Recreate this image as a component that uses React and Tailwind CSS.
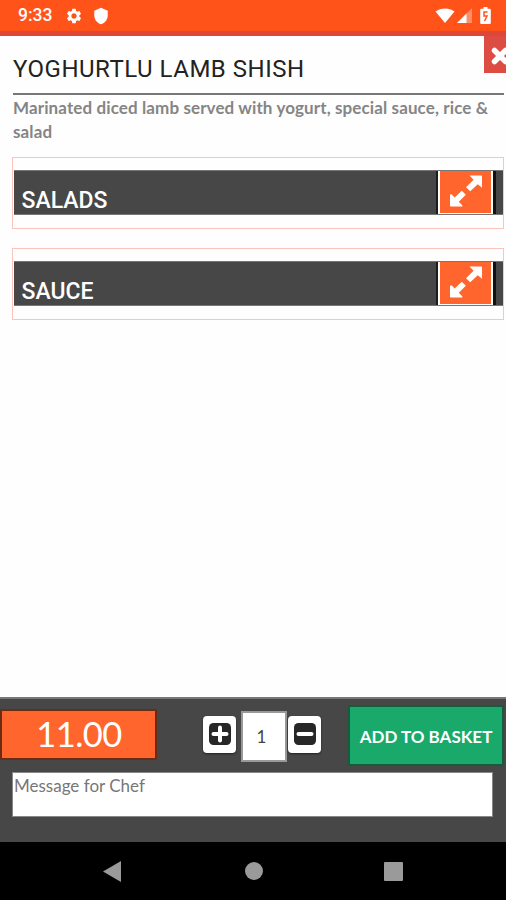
import React from 'react';
import { MdSettings, MdShield } from 'react-icons/md';

const ResizeIcon = () => (
    <svg className="w-[34px] h-[34px]" viewBox="0 0 34 34" fill="#fff">
        <path d="M20.500 1.500H32.200a.8.8 0 0 1 .8.800V13.800L28.800 10.200L21.200 17.200L17 13.200L24.600 5.800Z" />
        <path d="M1.800 20.200q.6 0 1 .4L5.600 23.500L12.800 16.800L16.800 20.800L9.800 27.800L13.400 31.500V32.500H1.800a.8.8 0 0 1-.8-.8V21Z" />
    </svg>
);

const StatusBar = () => (
    <div className="h-9 bg-[#ff5319] border-b-[5px] border-[#de4736] flex items-center justify-between pl-[18px] pr-[15px] text-white">
        <div className="flex items-center">
            <span className="w-[35px] font-['Roboto',sans-serif] font-medium text-[17.500px] leading-none">9:33</span>
            <MdSettings className="w-[18px] h-[18px] ml-3" />
            <MdShield className="w-[18px] h-[18px] ml-[9px]" />
        </div>
        <div className="flex items-center">
            <svg className="w-5 h-4" viewBox="0 0 20 16" fill="#fff">
                <path d="M10 15L.5 3.500C6 -.5 14 -.5 19.500 3.500Z" />
            </svg>
            <svg className="w-[15px] h-[15px] ml-[2px]" viewBox="0 0 15 15" fill="#fff">
                <path d="M0 15L15 0V15Z" fillOpacity=".35" />
                <path d="M0 15L9.500 5.500V15Z" />
            </svg>
            <svg className="w-[11px] h-[17px] ml-2" viewBox="0 0 11 17">
                <path d="M3.500 0h4v1.800h2.300q1 0 1 1V16q0 1-1 1H1.200q-1 0-1-1V2.800q0-1 1-1h2.300Z" fill="#fff" />
                <path d="M7.500 5H4V9H7L4.500 14" fill="none" stroke="#ff5319" strokeWidth="1.500" />
            </svg>
        </div>
    </div>
);

const OptionGroup = ({ title }) => (
    <div className="h-[72px] border border-[#fbc4bc] pl-px py-3">
        <div className="h-[45px] bg-[#474747] border-y border-[#777] flex">
            <h2 className="flex-1 pl-[7.500px] pt-[14px] h-[43px] font-['Roboto',sans-serif] font-medium text-[23px] leading-8 text-white">
                {title}
            </h2>
            <div className="w-[2px] bg-[#1c1c1c]" />
            <button className="w-[55px] border-x-2 border-b border-white bg-[#ff652d] flex items-start justify-center pt-[3px]">
                <ResizeIcon />
            </button>
            <div className="w-[10px] border-l-[3px] border-[#111]" />
        </div>
    </div>
);

const QuantityButton = ({ plus }) => (
    <button className="w-[33px] h-[37px] rounded-[4px] bg-white shadow-[0_1px_2px_#222] flex justify-center pt-[7px]">
        <svg className="w-[22px] h-[22px]" viewBox="0 0 22 22">
            <rect width="22" height="22" rx="4.500" fill="#272727" />
            <path d="M4.500 11H17.500" stroke="#fff" strokeWidth="4" strokeLinecap="round" />
            {plus && <path d="M11 4.500V17.500" stroke="#fff" strokeWidth="4" strokeLinecap="round" />}
        </svg>
    </button>
);

const Footer = () => (
    <div className="h-[145px] bg-[#474747] border-t-2 border-[#777]">
        <div className="h-[73px] flex items-start">
            <div className="w-[157px] h-[51px] mt-[10px] border-2 border-[#6b2c16] bg-[#ff652d] flex items-center justify-center text-white text-[34.500px] leading-none tracking-[-0.500px] pl-[1px]">
                11.00
            </div>
            <div className="flex ml-[46px] mt-[12px]">
                <div className="mt-[5px]">
                    <QuantityButton plus />
                </div>
                <div className="w-[46px] h-[51px] ml-[5px] mr-[1px] bg-white border-2 border-[#999] flex items-center justify-center pr-[5px] text-[17px] text-[#444]">
                    1
                </div>
                <div className="mt-[5px]">
                    <QuantityButton />
                </div>
            </div>
            <button className="w-[156px] h-[61px] ml-[27px] mt-[6px] pt-[2px] border-2 border-[#165b3e] bg-[#18a96b] text-white font-bold text-[17px] whitespace-nowrap">
                ADD TO BASKET
            </button>
        </div>
        <textarea
            className="block w-[481px] h-[45px] ml-3 pl-[1px] bg-white border border-[#888] resize-none text-[17px] leading-[26px] placeholder:text-[#777]"
            placeholder="Message for Chef"
        />
    </div>
);

const NavBar = () => (
    <div className="h-[58px] bg-black flex items-center pl-[103px]">
        <svg className="w-[18px] h-[21px]" viewBox="0 0 18 21" fill="#9a9a9a">
            <path d="M18 0V21L0 10.500Z" />
        </svg>
        <div className="w-[18px] h-[18px] ml-[124px] rounded-full bg-[#9a9a9a]" />
        <div className="w-[19px] h-[19px] ml-[121px] rounded-[1px] bg-[#9a9a9a]" />
    </div>
);

const App = () => {
    return (
        <div className="w-[506px] h-[900px] relative overflow-hidden bg-[#fefefe] flex flex-col font-['Lato',sans-serif]">
            <StatusBar />
            <button className="absolute right-0 top-9 w-[22px] h-[37px] bg-[#dc4c42] overflow-hidden">
                <svg className="absolute left-[7px] top-[11px] w-[18px] h-[18px]" viewBox="0 0 18 18">
                    <path d="M3.500 3.500L14.500 14.500M14.500 3.500L3.500 14.500" stroke="#fff" strokeWidth="5.500" strokeLinecap="round" />
                </svg>
            </button>
            <main className="flex-1 pl-[13px] pr-[2px]">
                <h1 className="h-[59px] pt-[17px] border-b-2 border-[#777] font-['Roboto',sans-serif] text-[24px] leading-8 tracking-[0.500px] text-[#222]">
                    YOGHURTLU LAMB SHISH
                </h1>
                <p className="pt-[1px] font-bold text-[17px] leading-6 tracking-[0.110px] text-[#858585]">
                    Marinated diced lamb served with yogurt, special sauce, rice & salad
                </p>
                <div className="mt-[13px] space-y-[19px] -ml-px">
                    <OptionGroup title="SALADS" />
                    <OptionGroup title="SAUCE" />
                </div>
            </main>
            <Footer />
            <NavBar />
        </div>
    );
};

export default App;
